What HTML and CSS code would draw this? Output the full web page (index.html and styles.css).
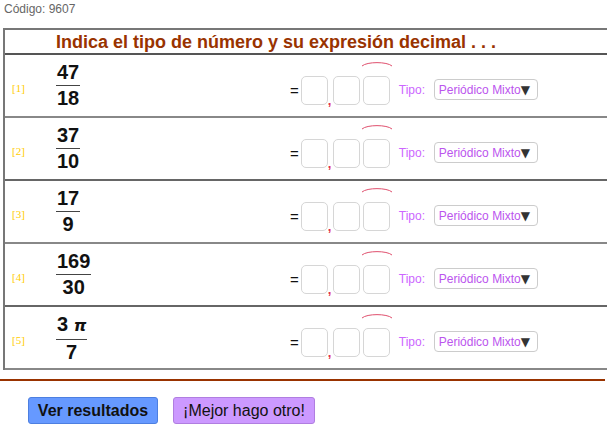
FILE: index.html
```html
<!DOCTYPE html>
<html lang="es">
<head>
<meta charset="utf-8">
<title>Tipo de número</title>
<link rel="stylesheet" href="styles.css">
</head>
<body>
<div class="code">Código: 9607</div>
<div class="table">
  <div class="head">Indica el tipo de número y su expresión decimal . . .</div>

  <div class="row">
    <div class="idx">[1]</div>
    <div class="fcol"><div class="frac"><span class="num">47</span><span class="den">18</span></div></div>
    <div class="answer">
      <span class="eq">=</span><span class="box"></span><span class="comma">,</span><span class="box"></span>
      <span class="period"><svg class="arc" width="32" height="7" viewBox="0 0 32 7"><path d="M1 6 C6 1.5, 26 1.5, 31 6" fill="none" stroke="#e0506e" stroke-width="1"/></svg><span class="box"></span></span>
    </div>
    <div class="tipo">Tipo:</div>
    <div class="select">Periódico Mixto<span class="caret">▼</span></div>
  </div>

  <div class="row">
    <div class="idx">[2]</div>
    <div class="fcol"><div class="frac"><span class="num">37</span><span class="den">10</span></div></div>
    <div class="answer">
      <span class="eq">=</span><span class="box"></span><span class="comma">,</span><span class="box"></span>
      <span class="period"><svg class="arc" width="32" height="7" viewBox="0 0 32 7"><path d="M1 6 C6 1.5, 26 1.5, 31 6" fill="none" stroke="#e0506e" stroke-width="1"/></svg><span class="box"></span></span>
    </div>
    <div class="tipo">Tipo:</div>
    <div class="select">Periódico Mixto<span class="caret">▼</span></div>
  </div>

  <div class="row">
    <div class="idx">[3]</div>
    <div class="fcol"><div class="frac"><span class="num">17</span><span class="den">9</span></div></div>
    <div class="answer">
      <span class="eq">=</span><span class="box"></span><span class="comma">,</span><span class="box"></span>
      <span class="period"><svg class="arc" width="32" height="7" viewBox="0 0 32 7"><path d="M1 6 C6 1.5, 26 1.5, 31 6" fill="none" stroke="#e0506e" stroke-width="1"/></svg><span class="box"></span></span>
    </div>
    <div class="tipo">Tipo:</div>
    <div class="select">Periódico Mixto<span class="caret">▼</span></div>
  </div>

  <div class="row">
    <div class="idx">[4]</div>
    <div class="fcol"><div class="frac"><span class="num">169</span><span class="den">30</span></div></div>
    <div class="answer">
      <span class="eq">=</span><span class="box"></span><span class="comma">,</span><span class="box"></span>
      <span class="period"><svg class="arc" width="32" height="7" viewBox="0 0 32 7"><path d="M1 6 C6 1.5, 26 1.5, 31 6" fill="none" stroke="#e0506e" stroke-width="1"/></svg><span class="box"></span></span>
    </div>
    <div class="tipo">Tipo:</div>
    <div class="select">Periódico Mixto<span class="caret">▼</span></div>
  </div>

  <div class="row">
    <div class="idx">[5]</div>
    <div class="fcol"><div class="frac"><span class="num">3 <i class="pi">π</i></span><span class="den">7</span></div></div>
    <div class="answer">
      <span class="eq">=</span><span class="box"></span><span class="comma">,</span><span class="box"></span>
      <span class="period"><svg class="arc" width="32" height="7" viewBox="0 0 32 7"><path d="M1 6 C6 1.5, 26 1.5, 31 6" fill="none" stroke="#e0506e" stroke-width="1"/></svg><span class="box"></span></span>
    </div>
    <div class="tipo">Tipo:</div>
    <div class="select">Periódico Mixto<span class="caret">▼</span></div>
  </div>
</div>
<div class="rule"></div>
<div class="buttons">
  <button class="btn btn-blue">Ver resultados</button>
  <button class="btn btn-violet">¡Mejor hago otro!</button>
</div>
</body>
</html>
```
FILE: styles.css
```css
html, body {
  margin: 0;
  padding: 0;
  background: #fff;
}
body {
  font-family: "Liberation Sans", Arial, sans-serif;
  width: 607px;
  overflow: hidden;
}
.code {
  font-size: 12px;
  color: #666;
  padding: 3px 0 0 4px;
  height: 14px;
  line-height: 13px;
}
.table {
  margin: 11px 0 0 3px;
  width: 602px;
  border-top: 2px solid #777;
  border-left: 2px solid #777;
}
.head {
  height: 23px;
  border-bottom: 2px solid #555;
  padding-left: 51px;
  font-family: "Liberation Sans", sans-serif;
  font-weight: bold;
  font-size: 18px;
  line-height: 25px;
  color: #993300;
  white-space: nowrap;
}
.row {
  height: 61px;
  border-bottom: 2px solid #888;
  display: flex;
  align-items: flex-start;
}
.row:nth-child(odd) { border-bottom-color: #666; }
.idx {
  width: 51px;
  padding: 27px 0 0 7px;
  box-sizing: border-box;
  font-family: "Liberation Serif", serif;
  font-size: 11px;
  line-height: 13px;
  color: #ffcc00;
}
.fcol {
  width: 234px;
  padding-top: 6px;
}
.frac {
  display: inline-flex;
  flex-direction: column;
  align-items: center;
  font-family: "Liberation Sans", sans-serif;
  font-weight: bold;
  font-size: 20px;
  color: #111;
}
.num {
  line-height: 22px;
  padding: 0 1px 2px;
  border-bottom: 1px solid #444;
  align-self: stretch;
  text-align: center;
  white-space: nowrap;
}
.den {
  line-height: 22px;
  padding-top: 1px;
}
.pi {
  font-family: "DejaVu Sans", sans-serif;
  font-weight: bold;
  font-size: 16px;
}
.answer {
  display: flex;
  align-items: flex-end;
  padding-top: 5px;
}
.eq {
  font-size: 15px;
  color: #111;
  line-height: 15px;
  margin: 0 2px 7px 0;
}
.box {
  display: block;
  width: 25px;
  height: 27px;
  border: 1.5px solid #d6d6d6;
  border-radius: 5px;
}
.comma {
  color: #e0304e;
  font-weight: bold;
  font-size: 13px;
  line-height: 10px;
  width: 5px;
  margin-bottom: -1px;
}
.period {
  display: flex;
  flex-direction: column;
  align-items: center;
  margin-left: 1px;
}
.arc {
  display: block;
  margin-bottom: 9px;
}
.tipo {
  font-size: 12px;
  line-height: 14px;
  color: #cc66ff;
  margin-left: 6px;
  width: 35px;
  padding-top: 28px;
}
.select {
  margin-top: 24px;
  width: 98px;
  height: 19px;
  border: 1.5px solid #ccc;
  border-radius: 4px;
  font-size: 12px;
  color: #bb55ee;
  padding: 0 0 0 4px;
  box-sizing: content-box;
  display: flex;
  align-items: center;
  white-space: nowrap;
}
.caret {
  color: #333;
  font-family: "DejaVu Sans", sans-serif;
  font-size: 12px;
  margin-left: 0;
}
.rule {
  margin-top: 9px;
  width: 605px;
  height: 2px;
  background: #993300;
}
.buttons {
  display: flex;
  gap: 15px;
  padding: 16px 0 0 28px;
}
.btn {
  height: 27px;
  border-radius: 3px;
  font-family: "Liberation Sans", Arial, sans-serif;
  font-size: 16px;
  color: #111;
  padding: 0 8px;
}
.btn-blue {
  background: #6699ff;
  border: 1px solid #4d7fe0;
  font-weight: bold;
  width: 130px;
}
.btn-violet {
  background: #cc99ff;
  border: 1px solid #b07ee0;
  width: 142px;
}
```
